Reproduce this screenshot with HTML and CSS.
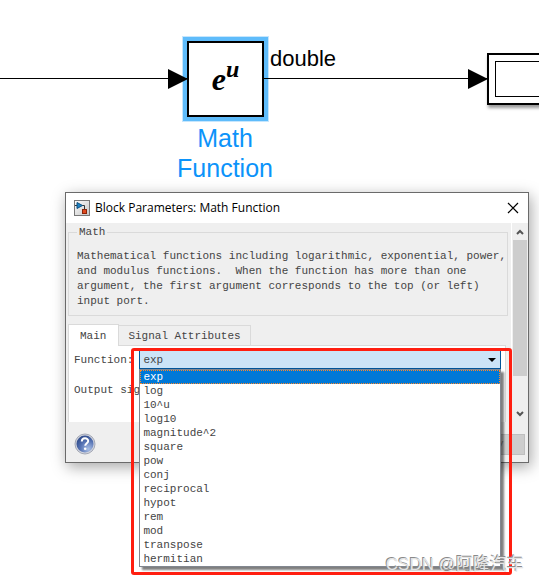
FILE: index.html
```html
<!DOCTYPE html>
<html lang="en">
<head>
    <meta charset="UTF-8">
    <meta name="viewport" content="width=device-width, initial-scale=1.0">
    <title>Block Parameters: Math Function</title>
    <link rel="stylesheet" href="styles.css">
</head>
<body>
    <main class="canvas">
        <!-- Diagram -->
        <div class="wire wire-in"></div>
        <div class="wire wire-out"></div>
        <div class="block math-block"><span class="formula">e<sup>u</sup></span></div>
        <div class="block-name">Math<br>Function</div>
        <div class="signal-type">double</div>
        <div class="block display-block"><div class="display-screen"></div></div>

        <!-- Parameters dialog -->
        <section class="dialog" role="dialog" aria-labelledby="dialogTitle">
            <header class="title-bar">
                <svg class="app-icon" viewBox="0 0 16 16">
                    <defs>
                        <linearGradient id="tile" x1="0" y1="0" x2="1" y2="1">
                            <stop offset="0" stop-color="#ffffff"/>
                            <stop offset="1" stop-color="#c4c4c4"/>
                        </linearGradient>
                    </defs>
                    <rect x="0.5" y="0.5" width="15" height="15" fill="url(#tile)" stroke="#777"/>
                    <path d="M1 5.5h2M8 5.5h2.500v4" fill="none" stroke="#333"/>
                    <path d="M3 2.500l5.500 3-5.500 3z" fill="#1f84c4" stroke="#0d4f80"/>
                    <rect x="8.500" y="9.500" width="4" height="4" fill="#e0491e" stroke="#8c2408"/>
                </svg>
                <h1 id="dialogTitle">Block Parameters: Math Function</h1>
                <button class="close" aria-label="Close">
                    <svg viewBox="0 0 12 12"><path d="M1 1l10 10M11 1L1 11" stroke="#000" stroke-width="1.2"/></svg>
                </button>
            </header>

            <div class="dialog-body">
                <div class="content">
                    <fieldset class="description">
                        <legend>Math</legend>
                        <p>Mathematical functions including logarithmic, exponential, power,
and modulus functions.  When the function has more than one
argument, the first argument corresponds to the top (or left)
input port.</p>
                    </fieldset>

                    <div class="tabs" role="tablist">
                        <button class="tab active" role="tab" aria-selected="true">Main</button>
                        <button class="tab" role="tab" aria-selected="false">Signal Attributes</button>
                    </div>
                    <div class="panel" role="tabpanel">
                        <div class="row">
                            <label for="function">Function:</label>
                            <div class="combo">
                                <select id="function">
                                    <option>exp</option>
                                </select>
                                <svg class="arrow" viewBox="0 0 8 4"><path d="M0 0h8L4 4z"/></svg>
                                <ul class="options" role="listbox" aria-label="Function">
                                    <li class="selected" role="option" aria-selected="true">exp</li>
                                    <li role="option">log</li>
                                    <li role="option">10^u</li>
                                    <li role="option">log10</li>
                                    <li role="option">magnitude^2</li>
                                    <li role="option">square</li>
                                    <li role="option">pow</li>
                                    <li role="option">conj</li>
                                    <li role="option">reciprocal</li>
                                    <li role="option">hypot</li>
                                    <li role="option">rem</li>
                                    <li role="option">mod</li>
                                    <li role="option">transpose</li>
                                    <li role="option">hermitian</li>
                                </ul>
                                <div class="highlight"></div>
                            </div>
                        </div>
                        <div class="row">
                            <span>Output sig</span>
                        </div>
                    </div>
                </div>
                <div class="scrollbar">
                    <svg viewBox="0 0 8 6"><path d="M1 5l3-3 3 3" /></svg>
                    <div class="thumb"></div>
                    <svg viewBox="0 0 8 6"><path d="M1 1l3 3 3-3" /></svg>
                </div>
            </div>

            <footer class="dialog-footer">
                <button class="help" aria-label="Help">
                    <svg viewBox="0 0 22 22">
                        <defs>
                            <radialGradient id="ball" cx="0.7" cy="0.8" r="0.8">
                                <stop offset="0" stop-color="#a9bfe6"/>
                                <stop offset="0.6" stop-color="#5673b4"/>
                                <stop offset="1" stop-color="#34508f"/>
                            </radialGradient>
                        </defs>
                        <circle cx="11" cy="11" r="10" fill="#cfd2dc" stroke="#a4a9b6"/>
                        <circle cx="11" cy="11" r="8.500" fill="url(#ball)"/>
                        <path d="M7.800 8.600c0-4.400 6.400-4.200 6.400-.6 0 2.200-3 2.300-3 4.800" fill="none" stroke="#fff" stroke-width="2"/>
                        <circle cx="11.200" cy="15.800" r="1.300" fill="#fff"/>
                    </svg>
                </button>
                <button class="apply" disabled>Apply</button>
            </footer>
        </section>

        <div class="watermark">CSDN @阿隆汽车</div>
    </main>
</body>
</html>
```

FILE: styles.css
```css
* {
    box-sizing: border-box;
}
body {
    margin: 0;
    background: #fff;
    font-family: "Liberation Mono", monospace;
    font-size: 11px;
    color: #444;
}
button {
    font: inherit;
    color: inherit;
    padding: 0;
    border: none;
    background: none;
}
.canvas {
    position: relative;
    min-height: 100vh;
    overflow: hidden;
}

/* Diagram */
.wire {
    position: absolute;
    top: 78px;
    height: 1px;
    background: #000;
    z-index: 1;
}
.wire::after {
    content: "";
    position: absolute;
    right: 0;
    top: -9px;
    border: 10px solid transparent;
    border-left: 20px solid #000;
    border-right: none;
}
.wire-in {
    left: 0;
    width: 188px;
}
.wire-out {
    left: 264px;
    width: 224px;
}
.block {
    position: absolute;
    background: #fff;
    border: 2px solid #000;
}
.math-block {
    left: 187px;
    top: 41px;
    width: 77px;
    height: 76px;
    box-shadow: 0 0 0 4px #5fbcfb, 0 0 0 5px #c6e6fd;
    display: flex;
    align-items: center;
    justify-content: center;
}
.formula {
    font: italic bold 32px/32px "Liberation Serif", serif;
    color: #000;
}
.formula sup {
    font-size: 24px;
    line-height: 0;
    vertical-align: 13px;
}
.block-name {
    position: absolute;
    left: 165px;
    top: 123px;
    width: 120px;
    font: 25px/30px "Liberation Sans", sans-serif;
    text-align: center;
    color: #0c93fa;
}
.signal-type {
    position: absolute;
    left: 270px;
    top: 46px;
    font: 22px/25px "Liberation Sans", sans-serif;
    color: #000;
}
.display-block {
    left: 487px;
    top: 53px;
    width: 90px;
    height: 52px;
    padding: 6px;
    box-shadow: 1px 3px 3px rgba(0, 0, 0, 0.4);
}
.display-screen {
    height: 100%;
    border: 1px solid #000;
}

/* Dialog window */
.dialog {
    position: absolute;
    left: 65px;
    right: 10px;
    top: 192px;
    z-index: 2;
    background: #efefef;
    border: 1px solid #6a6a6a;
    box-shadow: 2px 4px 14px rgba(0, 0, 0, 0.35);
}
.title-bar {
    display: flex;
    align-items: center;
    gap: 5px;
    height: 30px;
    padding: 0 9px 0 8px;
    background: #fff;
}
.app-icon {
    width: 16px;
    height: 16px;
}
.title-bar h1 {
    flex: 1;
    margin: 0;
    font: 12px/16px "Open Sans", sans-serif;
    color: #000;
}
.close {
    display: flex;
}
.close svg {
    width: 12px;
    height: 12px;
}
.dialog-body {
    display: flex;
    height: 199px;
}
.content {
    flex: 1;
    min-width: 0;
    padding: 2px 3px 0 2px;
}
.description {
    min-width: 0;
    height: 91px;
    margin: 0;
    padding: 0 0 0 8px;
    border: 1px solid #dadada;
}
.description legend {
    padding: 0 2px;
    line-height: 15px;
}
.description p {
    margin: 9px 0 0;
    line-height: 15px;
    white-space: pre;
}
.tabs {
    display: flex;
    align-items: flex-end;
    height: 29px;
}
.tab {
    height: 20px;
    padding: 0 9px;
    border: 1px solid #dadada;
    border-left: none;
    border-bottom: none;
}
.tab.active {
    position: relative;
    z-index: 1;
    height: 22px;
    margin-bottom: -1px;
    padding: 0 12px 0 11px;
    border-left: 1px solid #dadada;
    background: #fff;
}
.panel {
    height: 77px;
    margin-right: 2px;
    padding: 3px 4px 0 5px;
    background: #fff;
    border: 1px solid #dadada;
    border-bottom: none;
}
.row {
    display: flex;
    align-items: center;
    gap: 6px;
    height: 21px;
    margin-bottom: 9px;
}

/* Function drop-down */
.combo {
    flex: 1;
    position: relative;
}
.combo select {
    display: block;
    width: 100%;
    height: 19px;
    padding: 0 3px;
    border: 1px solid #005499;
    border-radius: 0;
    background: #cce4f7;
    font: inherit;
    color: inherit;
    appearance: none;
}
.arrow {
    position: absolute;
    right: 5px;
    top: 8px;
    width: 8px;
    height: 4px;
}
.options {
    position: absolute;
    z-index: 2;
    left: 0;
    right: 0;
    top: 100%;
    margin: 0;
    padding: 0;
    list-style: none;
    background: #fff;
    border: 1px solid #828790;
    box-shadow: 3px 3px 2px rgba(0, 0, 0, 0.5);
}
.options li {
    height: 14px;
    padding: 0 3px;
    line-height: 14px;
}
.options .selected {
    padding: 0 2px;
    line-height: 13px;
    border: 1px dotted #ff8728;
    background: #0078d7;
    color: #fff;
}
.highlight {
    position: absolute;
    z-index: 3;
    left: -8px;
    right: -11px;
    top: -2px;
    height: 227px;
    border: 3px solid #ff1e10;
    border-radius: 3px;
    pointer-events: none;
}

.scrollbar {
    display: flex;
    flex-direction: column;
    align-items: center;
    width: 17px;
    padding: 6px 1px 5px;
    border-left: 1px solid #fff;
}
.scrollbar svg {
    width: 8px;
    height: 6px;
    fill: none;
    stroke: #555;
    stroke-width: 2;
}
.thumb {
    width: 100%;
    height: 136px;
    margin: 5px 0 auto;
    background: #cdcdcd;
}
.dialog-footer {
    display: flex;
    align-items: center;
    justify-content: space-between;
    height: 40px;
    padding: 4px 3px 0 8px;
}
.help svg {
    display: block;
    width: 22px;
    height: 22px;
}
.apply {
    width: 76px;
    height: 21px;
    background: #cdcdcd;
    border: 1px solid #bfbfbf;
    color: #838383;
}
.watermark {
    position: absolute;
    z-index: 4;
    right: 15px;
    bottom: 6px;
    font: 17px/26px "Liberation Sans", "Noto Sans CJK SC", sans-serif;
    color: #e4e4e4;
    text-shadow: -1px -1px 0 #8a8a8a;
}
```
